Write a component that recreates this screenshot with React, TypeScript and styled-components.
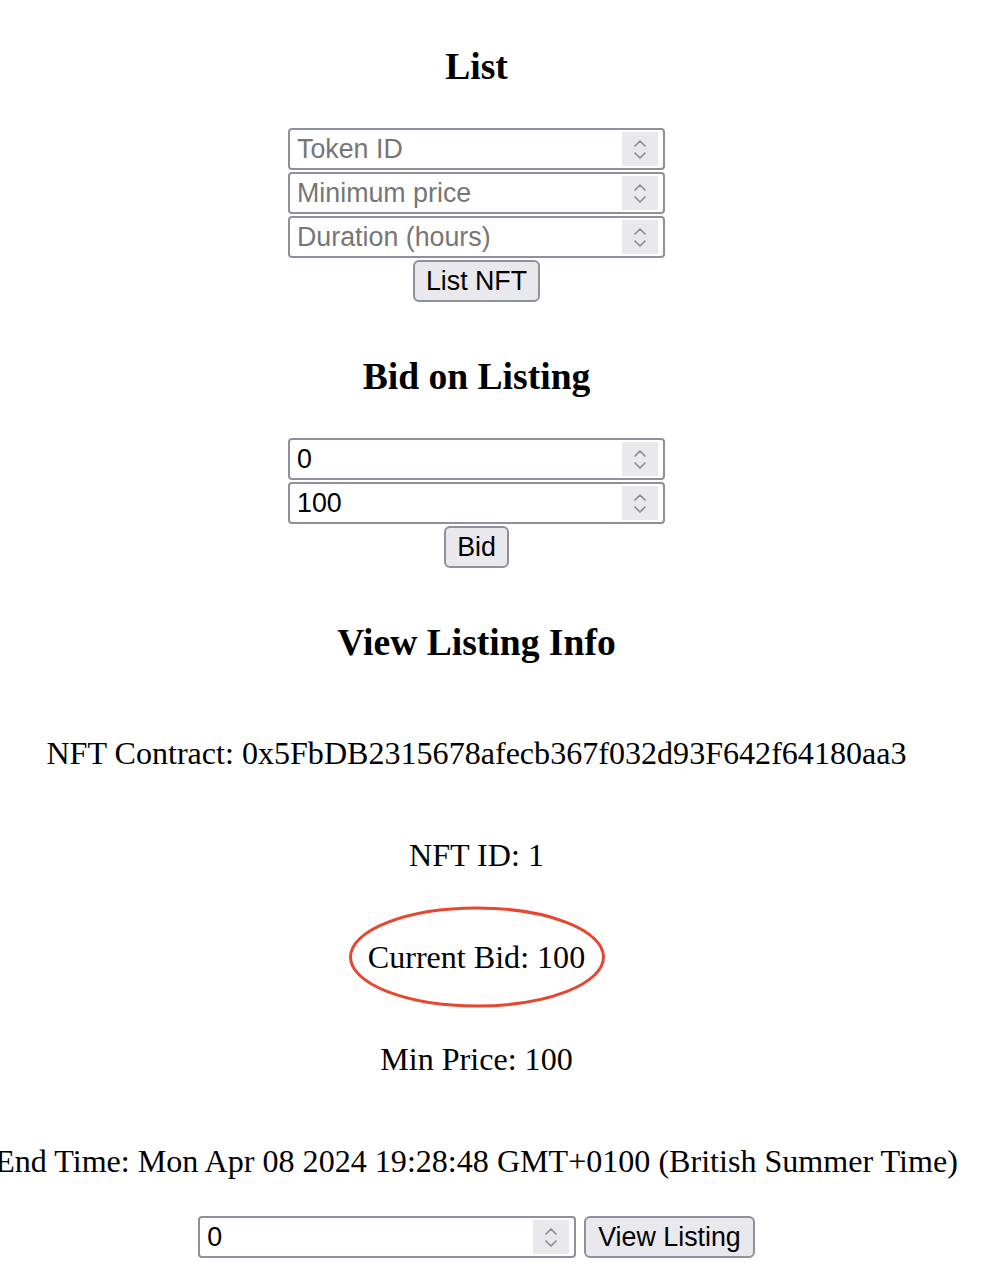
import React from "react";
import styled, { createGlobalStyle } from "styled-components";

const GlobalStyle = createGlobalStyle`
  html, body { margin: 0; padding: 0; background: #ffffff; }
  body {
    font-family: "Liberation Serif", "Times New Roman", serif;
    color: #000000;
    overflow-x: hidden;
  }
`;

const Page = styled.main`
  width: 953px;
  display: flex;
  flex-direction: column;
  align-items: center;
  padding-top: 45px;
`;

const Heading = styled.h3<{ $top?: number }>`
  margin: ${(p) => p.$top ?? 0}px 0 0 0;
  font-size: 37.6px;
  line-height: 44px;
  font-weight: bold;
  white-space: nowrap;
`;

const Form = styled.div`
  margin-top: 39px;
  display: flex;
  flex-direction: column;
  align-items: center;
  gap: 2px;
`;

const FieldWrap = styled.div<{ $width?: number }>`
  position: relative;
  width: ${(p) => p.$width ?? 377}px;
  height: 42px;
`;

const Field = styled.input`
  width: 100%;
  height: 100%;
  box-sizing: border-box;
  border: 2px solid #8f8f9d;
  border-radius: 4px;
  padding: 1px 50px 0 7px;
  margin: 0;
  font-family: "Liberation Sans", Arial, sans-serif;
  font-size: 26.8px;
  color: #000000;
  background: #ffffff;
  outline: none;
  &::placeholder {
    color: #767676;
    opacity: 1;
  }
`;

const Spinner = styled.div`
  position: absolute;
  top: 4px;
  right: 7px;
  width: 36px;
  height: 34px;
  background: #e9e9ed;
  display: flex;
  flex-direction: column;
  align-items: center;
  justify-content: center;
  gap: 5px;
  pointer-events: none;
`;

const Button = styled.button`
  height: 42px;
  box-sizing: border-box;
  border: 2px solid #8f8f9d;
  border-radius: 6px;
  background: #e9e9ed;
  padding: 0 11px;
  margin: 0;
  font-family: "Liberation Sans", Arial, sans-serif;
  font-size: 26.8px;
  color: #000000;
  cursor: pointer;
`;

const InfoList = styled.div`
  margin-top: 70px;
  display: flex;
  flex-direction: column;
  align-items: center;
  gap: 66px;
`;

const InfoLine = styled.p`
  position: relative;
  margin: 0;
  font-size: 32.1px;
  line-height: 36px;
  white-space: nowrap;
`;

const Ring = styled.svg`
  position: absolute;
  left: 50%;
  top: 50%;
  width: 260px;
  height: 104px;
  transform: translate(-50%, -50%);
  overflow: visible;
  pointer-events: none;
`;

const Row = styled.div`
  margin-top: 37px;
  display: flex;
  align-items: center;
  gap: 8px;
  padding-bottom: 8px;
`;

const WideButton = styled(Button)`
  padding: 0 12px;
`;

const Chevron: React.FC<{ up?: boolean }> = ({ up }) => (
  <svg width="14" height="8" viewBox="0 0 14 8">
    <path
      d={up ? "M2 7 L7 2 L12 7" : "M2 1 L7 6 L12 1"}
      fill="none"
      stroke="#8e8e93"
      strokeWidth="1.7"
      strokeLinecap="round"
      strokeLinejoin="round"
    />
  </svg>
);

const NumberField: React.FC<{ placeholder?: string; value?: string; width?: number }> = ({
  placeholder,
  value,
  width,
}) => (
  <FieldWrap $width={width}>
    <Field type="text" placeholder={placeholder} defaultValue={value} />
    <Spinner>
      <Chevron up />
      <Chevron />
    </Spinner>
  </FieldWrap>
);

export default function App() {
  return (
    <>
      <GlobalStyle />
      <Page>
        <Heading>List</Heading>
        <Form>
          <NumberField placeholder="Token ID" />
          <NumberField placeholder="Minimum price" />
          <NumberField placeholder="Duration (hours)" />
          <Button>List NFT</Button>
        </Form>

        <Heading $top={53}>Bid on Listing</Heading>
        <Form>
          <NumberField value="0" />
          <NumberField value="100" />
          <Button>Bid</Button>
        </Form>

        <Heading $top={53}>View Listing Info</Heading>
        <InfoList>
          <InfoLine>NFT Contract: 0x5FbDB2315678afecb367f032d93F642f64180aa3</InfoLine>
          <InfoLine>NFT ID: 1</InfoLine>
          <InfoLine>
            Current Bid: 100
            <Ring viewBox="0 0 260 104">
              <ellipse cx="130" cy="52" rx="126.5" ry="49" fill="none" stroke="#e5472f" strokeWidth="3" />
            </Ring>
          </InfoLine>
          <InfoLine>Min Price: 100</InfoLine>
          <InfoLine>End Time: Mon Apr 08 2024 19:28:48 GMT+0100 (British Summer Time)</InfoLine>
        </InfoList>
        <Row>
          <NumberField value="0" width={378} />
          <WideButton>View Listing</WideButton>
        </Row>
      </Page>
    </>
  );
}
